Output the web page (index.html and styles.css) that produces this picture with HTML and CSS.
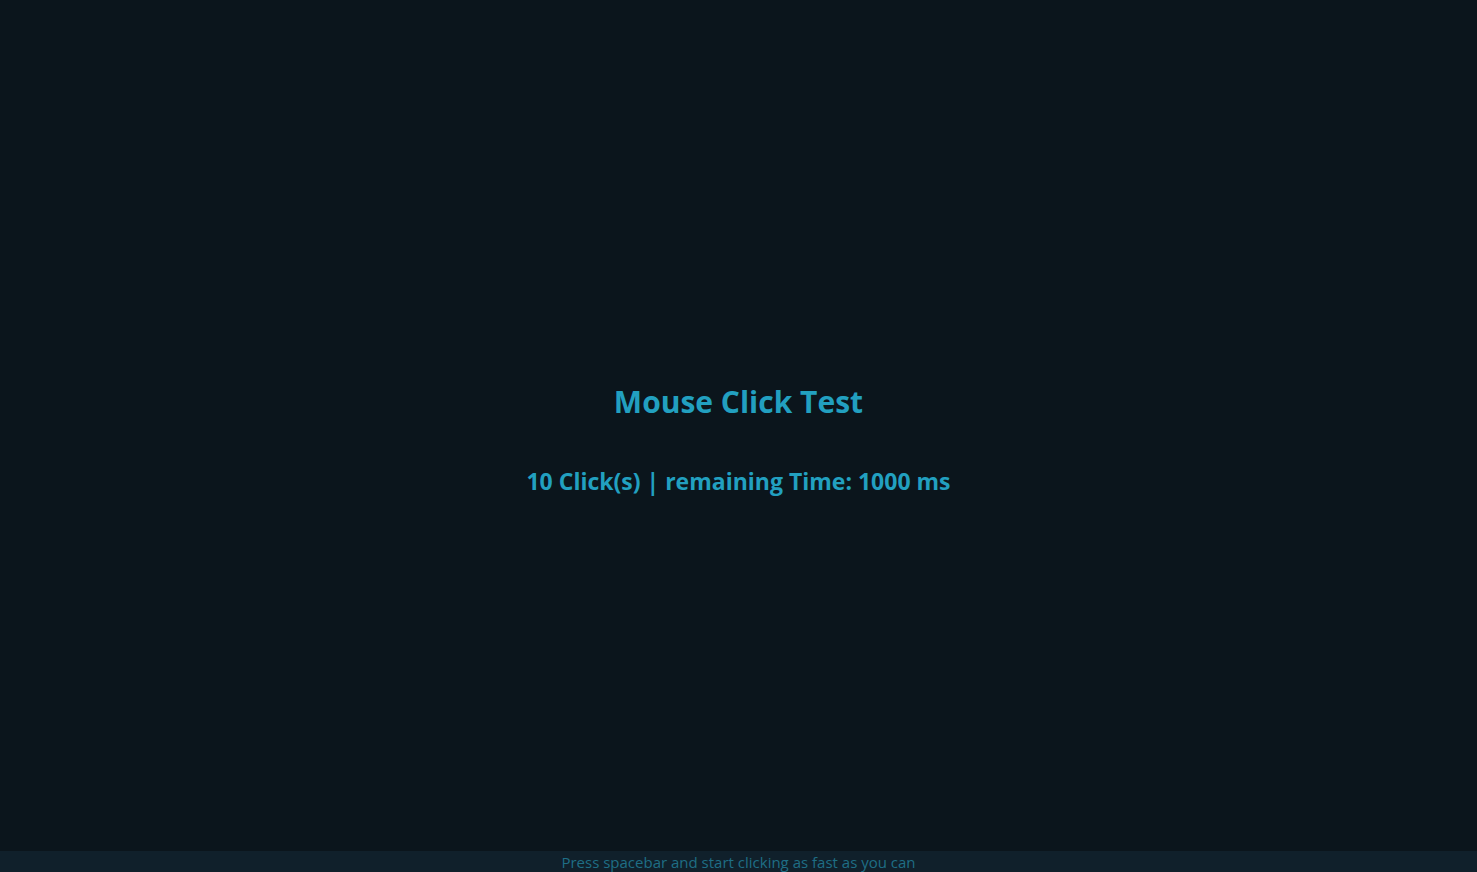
FILE: index.html
```html
<!DOCTYPE html>
<html>
<head>
<meta charset="utf-8">
<link rel="stylesheet" href="styles.css">
</head>
<body>
<div class="page">
  <main class="main">
    <h1 class="title">Mouse Click Test</h1>
    <h2 class="status">10 Click(s) | remaining Time: 1000 ms</h2>
  </main>
  <footer class="footer">Press spacebar and start clicking as fast as you can</footer>
</div>
</body>
</html>
```
FILE: styles.css
```css
html, body {
  margin: 0;
  padding: 0;
  background: #0b151c;
}
body {
  font-family: "Open Sans", "Noto Sans", sans-serif;
}
.page {
  display: flex;
  flex-direction: column;
  height: 100vh;
}
.main {
  flex: 1;
  display: flex;
  flex-direction: column;
  align-items: center;
  justify-content: center;
  padding-top: 26px;
  color: #22a0c0;
}
.title {
  margin: 0;
  font-size: 30px;
  font-weight: 700;
  line-height: 40px;
}
.status {
  margin: 44px 0 0;
  font-size: 23px;
  font-weight: 700;
  line-height: 30px;
}
.footer {
  height: 21px;
  background: #10202b;
  color: #1f6e85;
  font-size: 15px;
  line-height: 22px;
  text-align: center;
}
```
